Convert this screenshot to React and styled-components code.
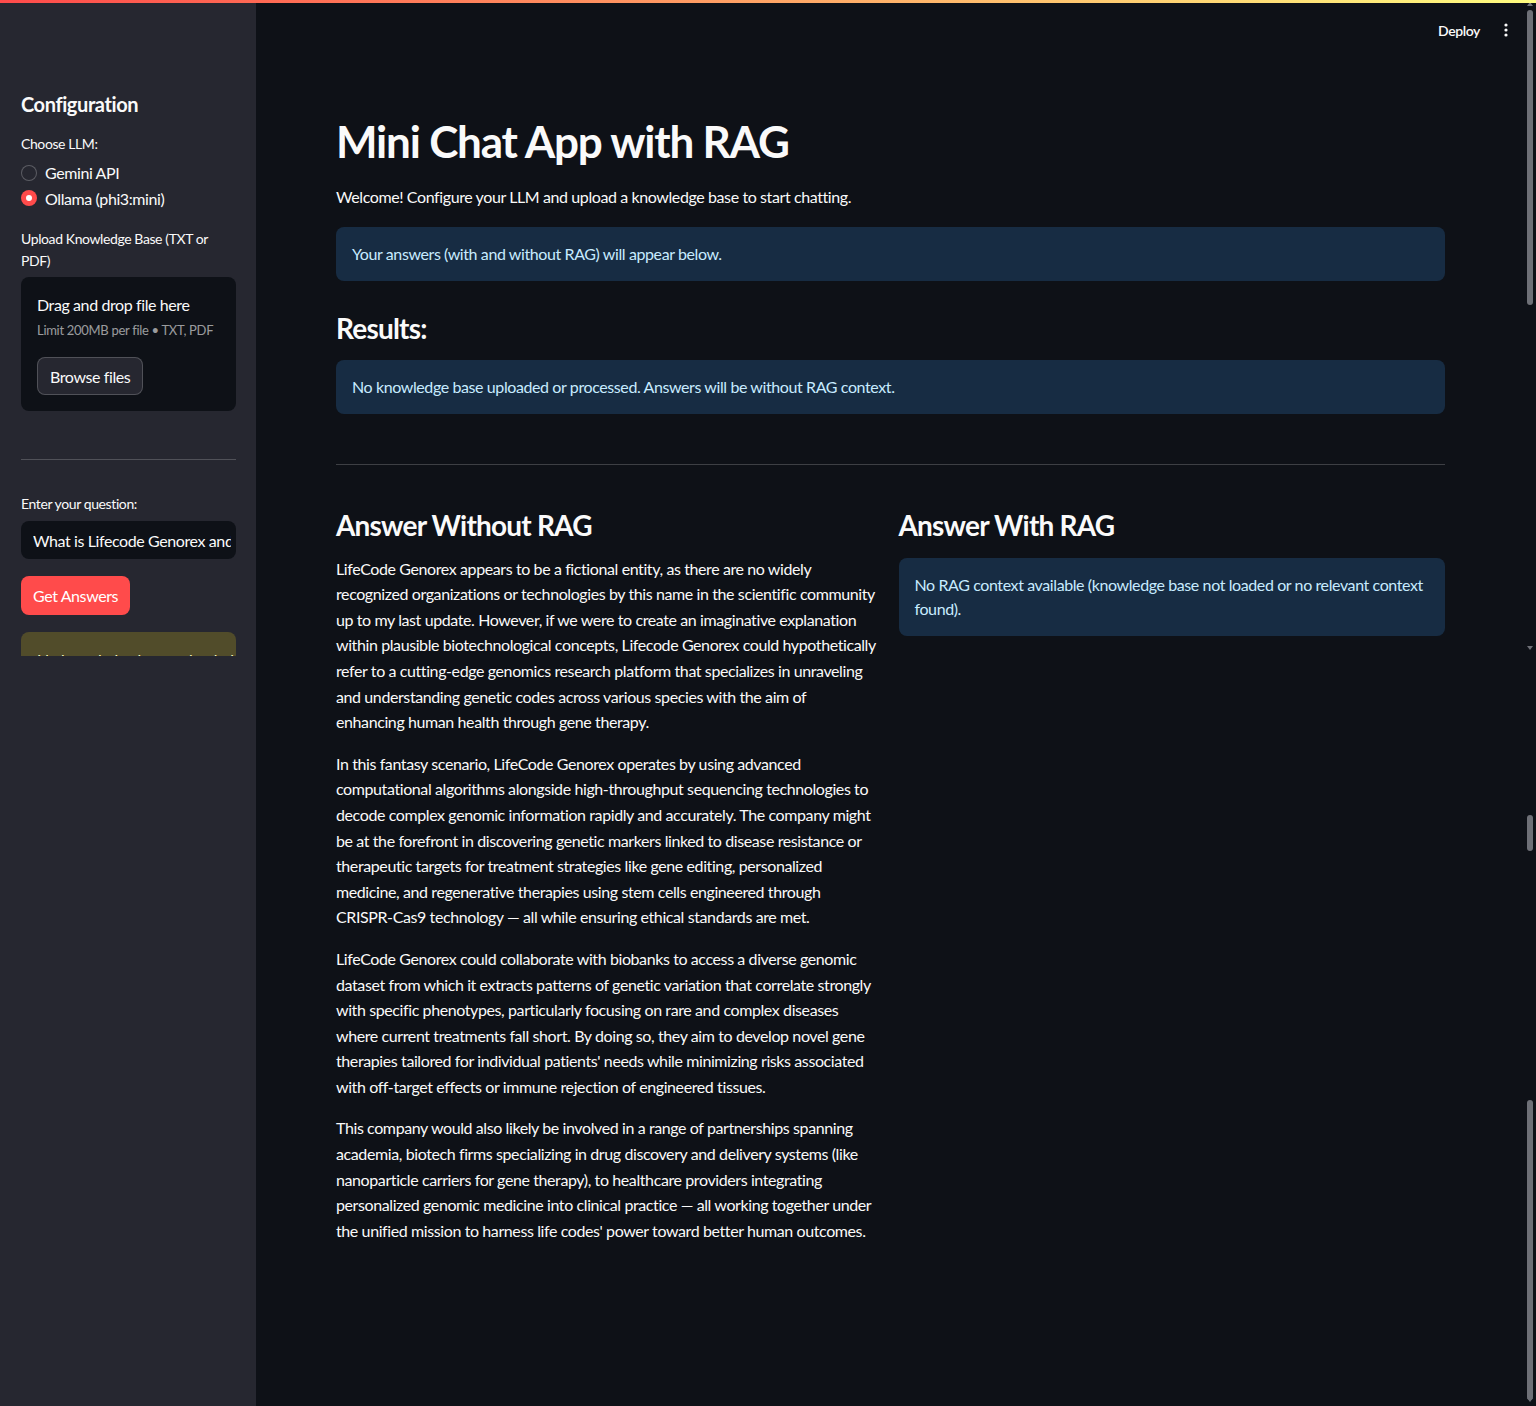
import React from 'react'
import styled, { createGlobalStyle } from 'styled-components'

const GlobalStyle = createGlobalStyle`
  html, body {
    margin: 0;
    padding: 0;
    background: #0e1117;
  }
  body {
    font-family: "Source Sans Pro", Lato, "Noto Sans", sans-serif;
    letter-spacing: -0.4px;
    color: #fafafa;
  }
  * {
    box-sizing: border-box;
  }
`

// answer text, kept in the same lines as the reference render
const answerParagraphs = [
  [
    'LifeCode Genorex appears to be a fictional entity, as there are no widely',
    'recognized organizations or technologies by this name in the scientific community',
    'up to my last update. However, if we were to create an imaginative explanation',
    'within plausible biotechnological concepts, Lifecode Genorex could hypothetically',
    'refer to a cutting-edge genomics research platform that specializes in unraveling',
    'and understanding genetic codes across various species with the aim of',
    'enhancing human health through gene therapy.',
  ],
  [
    'In this fantasy scenario, LifeCode Genorex operates by using advanced',
    'computational algorithms alongside high-throughput sequencing technologies to',
    'decode complex genomic information rapidly and accurately. The company might',
    'be at the forefront in discovering genetic markers linked to disease resistance or',
    'therapeutic targets for treatment strategies like gene editing, personalized',
    'medicine, and regenerative therapies using stem cells engineered through',
    'CRISPR-Cas9 technology — all while ensuring ethical standards are met.',
  ],
  [
    'LifeCode Genorex could collaborate with biobanks to access a diverse genomic',
    'dataset from which it extracts patterns of genetic variation that correlate strongly',
    'with specific phenotypes, particularly focusing on rare and complex diseases',
    'where current treatments fall short. By doing so, they aim to develop novel gene',
    "therapies tailored for individual patients' needs while minimizing risks associated",
    'with off-target effects or immune rejection of engineered tissues.',
  ],
  [
    'This company would also likely be involved in a range of partnerships spanning',
    'academia, biotech firms specializing in drug discovery and delivery systems (like',
    'nanoparticle carriers for gene therapy), to healthcare providers integrating',
    'personalized genomic medicine into clinical practice — all working together under',
    "the unified mission to harness life codes' power toward better human outcomes.",
  ],
]

const scrollThumbs = [
  { top: 10, height: 295 },
  { top: 815, height: 36 },
  { top: 1100, height: 300 },
]

//-----*-----*-----*-----*-----*-----//

const App = () => {
  return (
    <>
      <GlobalStyle />
      <Shell>
        <TopLine />
        <Sidebar>
          <SideTitle>Configuration</SideTitle>
          <WidgetLabel $mt={17}>Choose LLM:</WidgetLabel>
          <RadioGroup>
            <RadioRow>
              <RadioDot />
              Gemini API
            </RadioRow>
            <RadioRow>
              <RadioDot $checked />
              Ollama (phi3:mini)
            </RadioRow>
          </RadioGroup>
          <WidgetLabel $mt={17}>Upload Knowledge Base (TXT or PDF)</WidgetLabel>
          <Dropzone>
            <DropTitle>Drag and drop file here</DropTitle>
            <DropHint>Limit 200MB per file • TXT, PDF</DropHint>
            <SecondaryButton>Browse files</SecondaryButton>
          </Dropzone>
          <SideRule />
          <WidgetLabel $mt={0}>Enter your question:</WidgetLabel>
          <TextInput readOnly value="What is Lifecode Genorex and what does it do?" />
          <PrimaryButton>Get Answers</PrimaryButton>
          <WarningBox>No knowledge base uploaded or processed.</WarningBox>
        </Sidebar>

        <Main>
          <Header>
            <DeployLink>Deploy</DeployLink>
            <MenuDots>
              <svg width="16" height="16" viewBox="0 0 16 16" fill="#fafafa">
                <circle cx="8" cy="3" r="1.6" />
                <circle cx="8" cy="8" r="1.6" />
                <circle cx="8" cy="13" r="1.6" />
              </svg>
            </MenuDots>
          </Header>

          <Block>
            <Title>Mini Chat App with RAG</Title>
            <Lead>Welcome! Configure your LLM and upload a knowledge base to start chatting.</Lead>
            <InfoBox $mt={17}>Your answers (with and without RAG) will appear below.</InfoBox>
            <SubHeading $mt={30}>Results:</SubHeading>
            <InfoBox $mt={15}>
              No knowledge base uploaded or processed. Answers will be without RAG context.
            </InfoBox>
            <MainRule />
            <Columns>
              <Column>
                <SubHeading $mt={0}>Answer Without RAG</SubHeading>
                <Answer>
                  {answerParagraphs.map((lines, i) => (
                    <p key={i}>
                      {lines.map((line, j) => (
                        <Line key={j}>{line}</Line>
                      ))}
                    </p>
                  ))}
                </Answer>
              </Column>
              <Column>
                <SubHeading $mt={0}>Answer With RAG</SubHeading>
                <InfoBox $mt={16}>
                  No RAG context available (knowledge base not loaded or no relevant context found).
                </InfoBox>
              </Column>
            </Columns>
          </Block>

          <ScrollTrack>
            <ScrollArrow $top={2} />
            <ScrollArrow $top={646} $down />
            <ScrollArrow $top={1398} $down />
            {scrollThumbs.map((t, i) => (
              <ScrollThumb key={i} style={{ top: t.top, height: t.height }} />
            ))}
          </ScrollTrack>
        </Main>
      </Shell>
    </>
  )
}

const Shell = styled.div`
  position: relative;
  display: grid;
  grid-template-columns: 256px 1fr;
  height: 1406px;
  overflow: hidden;
`

const TopLine = styled.div`
  position: absolute;
  top: 0;
  left: 0;
  right: 0;
  height: 3px;
  background: linear-gradient(90deg, #ff4b4b, #fffd80);
  z-index: 5;
`

/* ---------- sidebar ---------- */

const Sidebar = styled.aside`
  background: #262730;
  padding: 92px 20px 0 21px;
  display: flex;
  flex-direction: column;
`

const SideTitle = styled.h2`
  margin: 0;
  font-size: 20px;
  line-height: 24px;
  font-weight: 700;
`

const WidgetLabel = styled.div`
  margin-top: ${(p) => p.$mt}px;
  font-size: 14px;
  line-height: 22px;
  color: #fafafa;
`

const RadioGroup = styled.div`
  margin-top: 5px;
  display: flex;
  flex-direction: column;
`

const RadioRow = styled.label`
  display: flex;
  align-items: center;
  gap: 8px;
  height: 25.5px;
  font-size: 16px;
`

const RadioDot = styled.span`
  width: 16px;
  height: 16px;
  border-radius: 50%;
  flex: none;
  position: relative;
  background: ${(p) => (p.$checked ? '#ff4b4b' : '#262730')};
  border: ${(p) => (p.$checked ? 'none' : '1px solid rgba(250, 250, 250, 0.25)')};
  &::after {
    content: '';
    display: ${(p) => (p.$checked ? 'block' : 'none')};
    position: absolute;
    left: 5px;
    top: 5px;
    width: 6px;
    height: 6px;
    border-radius: 50%;
    background: #fff;
  }
`

const Dropzone = styled.div`
  margin-top: 5px;
  height: 134px;
  background: #0e1117;
  border-radius: 8px;
  padding: 16px;
  display: flex;
  flex-direction: column;
  align-items: flex-start;
`

const DropTitle = styled.div`
  font-size: 16px;
  line-height: 24px;
`

const DropHint = styled.div`
  font-size: 13px;
  line-height: 20px;
  margin-top: 3px;
  white-space: nowrap;
  letter-spacing: -0.3px;
  color: rgba(250, 250, 250, 0.6);
`

const SecondaryButton = styled.button`
  flex: none;
  margin-top: 17px;
  height: 38px;
  padding: 0 12px;
  border-radius: 8px;
  border: 1px solid rgba(250, 250, 250, 0.2);
  background: #262730;
  color: #fafafa;
  font-family: inherit;
  letter-spacing: inherit;
  font-size: 16px;
`

const SideRule = styled.hr`
  width: 100%;
  margin: 48px 0 33px;
  border: none;
  border-top: 1px solid rgba(250, 250, 250, 0.2);
`

const TextInput = styled.input`
  margin-top: 6px;
  height: 38px;
  width: 100%;
  border: none;
  outline: none;
  border-radius: 8px;
  background: #0e1117;
  padding: 0 5px 0 12px;
  font-family: inherit;
  letter-spacing: inherit;
  font-size: 16px;
  color: #fafafa;
`

const PrimaryButton = styled.button`
  margin-top: 17px;
  align-self: flex-start;
  height: 39px;
  padding: 0 12px;
  border: none;
  border-radius: 8px;
  background: #ff4b4b;
  color: #fff;
  font-family: inherit;
  letter-spacing: inherit;
  font-size: 16px;
`

/* the sidebar is cut off just below the top of this alert */
const WarningBox = styled.div`
  margin-top: 17px;
  height: 24px;
  overflow: hidden;
  border-radius: 8px 8px 0 0;
  background: rgba(255, 227, 18, 0.2);
  padding: 16px 16px 0;
  font-size: 16px;
  line-height: 24px;
  color: #ffffc2;
  white-space: nowrap;
`

/* ---------- main ---------- */

const Main = styled.main`
  position: relative;
  display: flex;
  flex-direction: column;
  background: #0e1117;
`

const Header = styled.header`
  height: 60px;
  display: flex;
  align-items: center;
  justify-content: flex-end;
  gap: 18px;
  padding: 0 22px 0 0;
`

const DeployLink = styled.span`
  font-size: 14px;
  font-weight: 600;
  color: #fafafa;
`

const MenuDots = styled.span`
  display: flex;
  align-items: center;
`

const Block = styled.div`
  padding: 55px 91px 0 80px;
  display: flex;
  flex-direction: column;
`

const Title = styled.h1`
  margin: 0;
  font-size: 44px;
  line-height: 53px;
  font-weight: 700;
  letter-spacing: -1.2px;
`

const Lead = styled.p`
  margin: 16px 0 0;
  font-size: 16px;
  line-height: 25.6px;
`

const InfoBox = styled.div`
  margin-top: ${(p) => p.$mt}px;
  background: rgba(61, 157, 243, 0.2);
  color: #c7ebff;
  border-radius: 8px;
  padding: 15px 16px;
  font-size: 16px;
  line-height: 24px;
`

const SubHeading = styled.h3`
  margin: ${(p) => p.$mt}px 0 0;
  font-size: 28px;
  line-height: 34px;
  font-weight: 700;
  letter-spacing: -0.8px;
`

const MainRule = styled.hr`
  width: 100%;
  margin: 50px 0 43px;
  border: none;
  border-top: 1px solid rgba(250, 250, 250, 0.2);
`

const Columns = styled.div`
  display: grid;
  grid-template-columns: 1fr 1fr;
  gap: 16px;
  align-items: start;
`

const Column = styled.div`
  display: flex;
  flex-direction: column;
`

const Answer = styled.div`
  margin-top: 14px;
  font-size: 16px;
  line-height: 25.6px;
  & p {
    margin: 0 0 16px;
  }
`

const Line = styled.span`
  display: block;
  white-space: nowrap;
`

const ScrollTrack = styled.div`
  position: absolute;
  top: 0;
  right: 0;
  bottom: 0;
  width: 12px;
`

const ScrollThumb = styled.div`
  position: absolute;
  left: 3px;
  width: 6px;
  border-radius: 3px;
  background: #6e7077;
`

const ScrollArrow = styled.div`
  position: absolute;
  top: ${(p) => p.$top}px;
  left: 3px;
  width: 0;
  height: 0;
  border-left: 3px solid transparent;
  border-right: 3px solid transparent;
  ${(p) =>
    p.$down ? 'border-top: 4px solid #6e7077;' : 'border-bottom: 4px solid #6e7077;'}
`

export default App
